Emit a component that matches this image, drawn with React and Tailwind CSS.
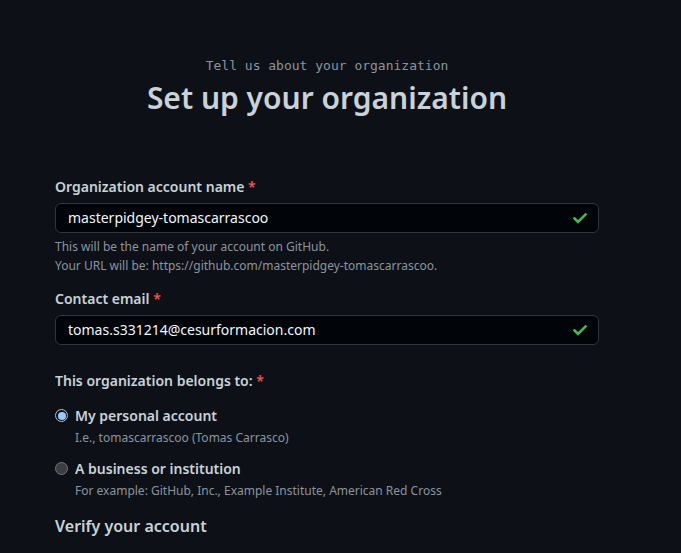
import React from 'react';

const CheckIcon = () => (
  <svg className="w-[16px] h-[16px] text-[#46b94f]" viewBox="0 0 16 16" fill="none">
    <path d="M2.5 8.5 6 12l7.5-7.5" stroke="currentColor" strokeWidth="2.6" strokeLinecap="square" />
  </svg>
);

const Field = ({ label, value, children }) => (
  <div>
    <label className="block text-sm font-semibold text-[#c9d1d9] leading-5">
      {label} <span className="text-[#f85149]">*</span>
    </label>
    <div className="mt-[6px] h-[30px] flex items-center justify-between rounded-md border border-[#30363d] bg-[#010409] pl-3 pr-[10px]">
      <span className="text-sm text-[#f0f6fc]">{value}</span>
      <CheckIcon />
    </div>
    {children}
  </div>
);

const Radio = ({ checked, title, note }) => (
  <div className="flex gap-[7px]">
    <div className="pt-[3px]">
      {checked ? (
        <div className="w-[13px] h-[13px] rounded-full border border-[#b8c0c8] bg-[#0d1117] p-[1.5px]">
          <div className="w-full h-full rounded-full bg-[#99c8ff]" />
        </div>
      ) : (
        <div className="w-[13px] h-[13px] rounded-full border border-[#6e7681] bg-[#3b3d40]" />
      )}
    </div>
    <div>
      <div className="text-sm font-semibold text-[#c9d1d9] leading-5">{title}</div>
      <div className="text-xs text-[#8b949e] leading-5 mt-[2px]">{note}</div>
    </div>
  </div>
);

const App = () => {
  return (
    <div className="min-h-[553px] bg-[#0d1117] font-['Noto_Sans','Open_Sans',sans-serif] pl-[55px]">
      <div className="w-[544px] pt-[56px]">
        <p className="text-center text-[13px] text-[#8b949e] font-['DejaVu_Sans_Mono','Liberation_Mono',monospace] leading-5">
          Tell us about your organization
        </p>
        <h1 className="text-center text-[30px] font-semibold text-[#c9d1d9] leading-[40px] mt-[2px]">
          Set up your organization
        </h1>

        <div className="mt-[59px] flex flex-col gap-[14px]">
          <Field label="Organization account name" value="masterpidgey-tomascarrascoo">
            <div className="mt-[4px] text-xs text-[#8b949e] leading-[19px]">
              <p>This will be the name of your account on GitHub.</p>
              <p>Your URL will be: https://github.com/masterpidgey-tomascarrascoo.</p>
            </div>
          </Field>
          <Field label="Contact email" value="tomas.s331214@cesurformacion.com" />
        </div>

        <div className="mt-[26px]">
          <p className="text-sm font-semibold text-[#c9d1d9] leading-5">
            This organization belongs to: <span className="text-[#f85149]">*</span>
          </p>
          <div className="mt-[15px] flex flex-col gap-[11px]">
            <Radio checked title="My personal account" note="I.e., tomascarrascoo (Tomas Carrasco)" />
            <Radio title="A business or institution" note="For example: GitHub, Inc., Example Institute, American Red Cross" />
          </div>
        </div>

        <h2 className="mt-[13px] text-base font-semibold text-[#c9d1d9] leading-6">Verify your account</h2>
      </div>
    </div>
  );
};

export default App;
